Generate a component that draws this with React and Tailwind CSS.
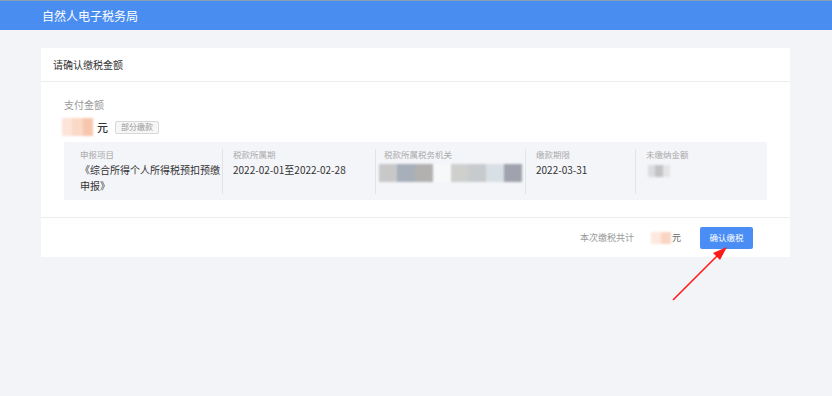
import React from 'react';

const font = { fontFamily: '"Noto Sans CJK SC", "Noto Sans", sans-serif' };

function Blur({ colors, className }) {
  return (
    <div className={`flex blur-[1px] ${className}`}>
      {colors.map((c, i) => (
        <div key={i} className="flex-1 h-full" style={{ backgroundColor: c }} />
      ))}
    </div>
  );
}

export default function App() {
  const cols = [
    { label: '申报项目', w: 'w-[158px]', pl: 'pl-4' },
    { label: '税款所属期', w: 'w-[153px]', pl: 'pl-[10px]' },
    { label: '税款所属税务机关', w: 'w-[150px]', pl: 'pl-2' },
    { label: '缴款期限', w: 'w-[110px]', pl: 'pl-[10px]' },
    { label: '未缴纳金额', w: 'flex-1', pl: 'pl-[10px]' },
  ];

  return (
    <div className="w-[832px] h-[396px] bg-[#f3f4f8] overflow-hidden" style={font}>
      <div className="h-[30px] bg-[#4a8df1] border-t border-[#8a9bb5] flex items-center pl-[42px]">
        <span className="text-white text-[12px] leading-none">自然人电子税务局</span>
      </div>

      <div className="ml-[41px] mt-[18px] w-[749px] bg-white">
        <div className="h-[34px] flex items-center pl-3 border-b border-[#ececec]">
          <span className="text-[10px] text-[#333]">请确认缴税金额</span>
        </div>

        <div className="pl-[23px] pr-[23px] pt-[18px] pb-[17px]">
          <div className="text-[10px] text-[#999] leading-none">支付金额</div>
          <div className="flex items-center mt-[7px] h-[20px]">
            <Blur
              colors={['#fde4d8', '#fbd9c8', '#f8c6ad']}
              className="w-[31px] h-[18px] -ml-[2px]"
            />
            <span className="ml-[4px] text-[11px] text-[#333] font-medium">元</span>
            <span className="ml-[7px] h-[13px] px-[5px] border border-[#d8d8d8] bg-[#f6f6f6] text-[8px] text-[#999] flex items-center rounded-[2px]">
              部分缴款
            </span>
          </div>

          <div className="mt-[5px] bg-[#f4f5f9] h-[58px] flex pt-[7px] pb-[6px]">
            {cols.map((c, i) => (
              <div
                key={c.label}
                className={`${c.w} ${c.pl} ${i > 0 ? 'border-l border-[#e3e4e8]' : ''}`}
              >
                <div className="text-[8.5px] text-[#aaa] leading-none pt-[1px]">{c.label}</div>
                {i === 0 && (
                  <div className="text-[10px] text-[#333] leading-[16px] mt-[3px] whitespace-nowrap">
                    《综合所得个人所得税预扣预缴
                    <br />
                    申报》
                  </div>
                )}
                {i === 1 && (
                  <div className="text-[10px] text-[#333] leading-[16px] mt-[3px]">2022-02-01至2022-02-28</div>
                )}
                {i === 2 && (
                  <Blur
                    colors={['#c9c8c8', '#a6afba', '#b2b1af', '#f7f8fa', '#cfcfcd', '#c8cbcd', '#d8dfe5', '#a0a3ad']}
                    className="w-[143px] h-[18px] mt-[5px] -ml-[5px]"
                  />
                )}
                {i === 3 && (
                  <div className="text-[10px] text-[#333] leading-[16px] mt-[3px]">2022-03-31</div>
                )}
                {i === 4 && (
                  <Blur
                    colors={['#dcdcde', '#c2c2c4', '#e4e4e6']}
                    className="w-[22px] h-[12px] mt-[6px] ml-[2px]"
                  />
                )}
              </div>
            ))}
          </div>
        </div>

        <div className="border-t border-[#ececec] h-[40px] flex items-center justify-end pr-[37px]">
          <span className="text-[9px] text-[#999]">本次缴税共计</span>
          <Blur colors={['#ffffff', '#fde8de', '#fbd5c3']} className="w-[30px] h-[12px] ml-[7px]" />
          <span className="ml-[1px] text-[9px] text-[#666]">元</span>
          <button className="ml-[19px] w-[53px] h-[22px] bg-[#4a8ef5] text-white text-[8.5px] rounded-[2px]">
            确认缴税
          </button>
        </div>
      </div>

      <svg className="absolute left-0 top-0 pointer-events-none" width="832" height="396">
        <line x1="673" y1="300" x2="718" y2="255" stroke="#ff1a1a" strokeWidth="1.6" />
        <polygon points="727,247 713,253 720,260" fill="#ff1a1a" />
      </svg>
    </div>
  );
}
